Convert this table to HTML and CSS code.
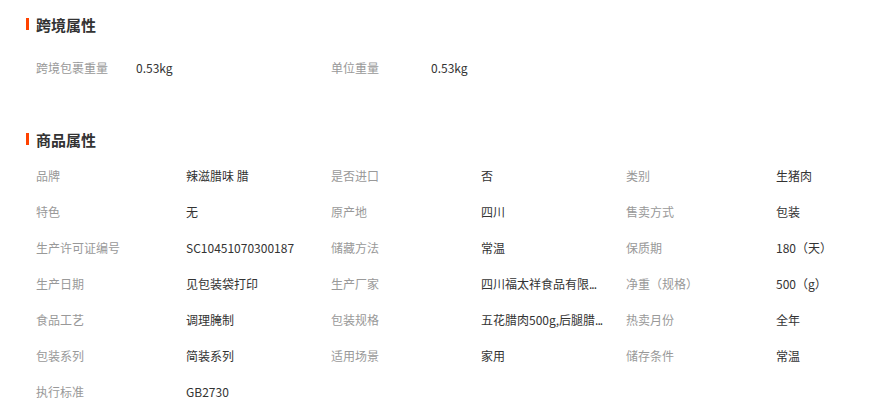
FILE: index.html
```html
<!DOCTYPE html>
<html lang="zh-CN">
  <head>
    <meta charset="UTF-8" />
    <meta name="viewport" content="width=device-width, initial-scale=1.0" />
    <title>商品属性</title>
    <link rel="stylesheet" href="styles.css">
  </head>
  <body>
    <div class="attr-section cross">
      <h3 class="attr-title"><span class="attr-bar"></span>跨境属性</h3>
      <ul class="attr-list short">
        <li><span class="attr-name">跨境包裹重量</span><span class="attr-value">0.53kg</span></li>
        <li><span class="attr-name">单位重量</span><span class="attr-value">0.53kg</span></li>
      </ul>
    </div>
    <div class="attr-section goods">
      <h3 class="attr-title"><span class="attr-bar"></span>商品属性</h3>
      <ul class="attr-list">
        <li><span class="attr-name">品牌</span><span class="attr-value">辣滋腊味 腊</span></li>
        <li><span class="attr-name">是否进口</span><span class="attr-value">否</span></li>
        <li><span class="attr-name">类别</span><span class="attr-value">生猪肉</span></li>
        <li><span class="attr-name">特色</span><span class="attr-value">无</span></li>
        <li><span class="attr-name">原产地</span><span class="attr-value">四川</span></li>
        <li><span class="attr-name">售卖方式</span><span class="attr-value">包装</span></li>
        <li><span class="attr-name">生产许可证编号</span><span class="attr-value">SC10451070300187</span></li>
        <li><span class="attr-name">储藏方法</span><span class="attr-value">常温</span></li>
        <li><span class="attr-name">保质期</span><span class="attr-value">180（天）</span></li>
        <li><span class="attr-name">生产日期</span><span class="attr-value">见包装袋打印</span></li>
        <li><span class="attr-name">生产厂家</span><span class="attr-value">四川福太祥食品有限<span class="dots">...</span></span></li>
        <li><span class="attr-name">净重（规格）</span><span class="attr-value">500（g）</span></li>
        <li><span class="attr-name">食品工艺</span><span class="attr-value">调理腌制</span></li>
        <li><span class="attr-name">包装规格</span><span class="attr-value">五花腊肉500g,后腿腊<span class="dots">...</span></span></li>
        <li><span class="attr-name">热卖月份</span><span class="attr-value">全年</span></li>
        <li><span class="attr-name">包装系列</span><span class="attr-value">简装系列</span></li>
        <li><span class="attr-name">适用场景</span><span class="attr-value">家用</span></li>
        <li><span class="attr-name">储存条件</span><span class="attr-value">常温</span></li>
        <li><span class="attr-name">执行标准</span><span class="attr-value">GB2730</span></li>
      </ul>
    </div>
  </body>
</html>
```

FILE: styles.css
```css
body {
  margin: 0;
  background-color: #fff;
  font-family: "Noto Sans CJK SC", "Noto Sans", sans-serif;
  font-size: 12px;
  color: #333;
}
.attr-section {
  padding-left: 26px;
}
.cross {
  padding-top: 14px;
}
.goods {
  padding-top: 43px;
}
.attr-title {
  display: flex;
  align-items: center;
  margin: 0;
  height: 20px;
  font-size: 15px;
  font-weight: bold;
  color: #333;
}
.attr-bar {
  width: 3px;
  height: 12px;
  margin-right: 7px;
  background-color: #ff4200;
}
.attr-list {
  display: grid;
  grid-template-columns: repeat(3, 295px);
  margin: 0;
  padding: 0 0 0 10px;
  list-style: none;
}
.cross .attr-list {
  margin-top: 16px;
}
.goods .attr-list {
  margin-top: 9px;
}
.attr-list li {
  display: flex;
  height: 36px;
  line-height: 36px;
}
.attr-name {
  width: 150px;
  flex-shrink: 0;
  color: #999;
}
.short .attr-name {
  width: 100px;
}
.attr-value {
  white-space: nowrap;
  color: #333;
}
.dots {
  letter-spacing: -1px;
}
```
